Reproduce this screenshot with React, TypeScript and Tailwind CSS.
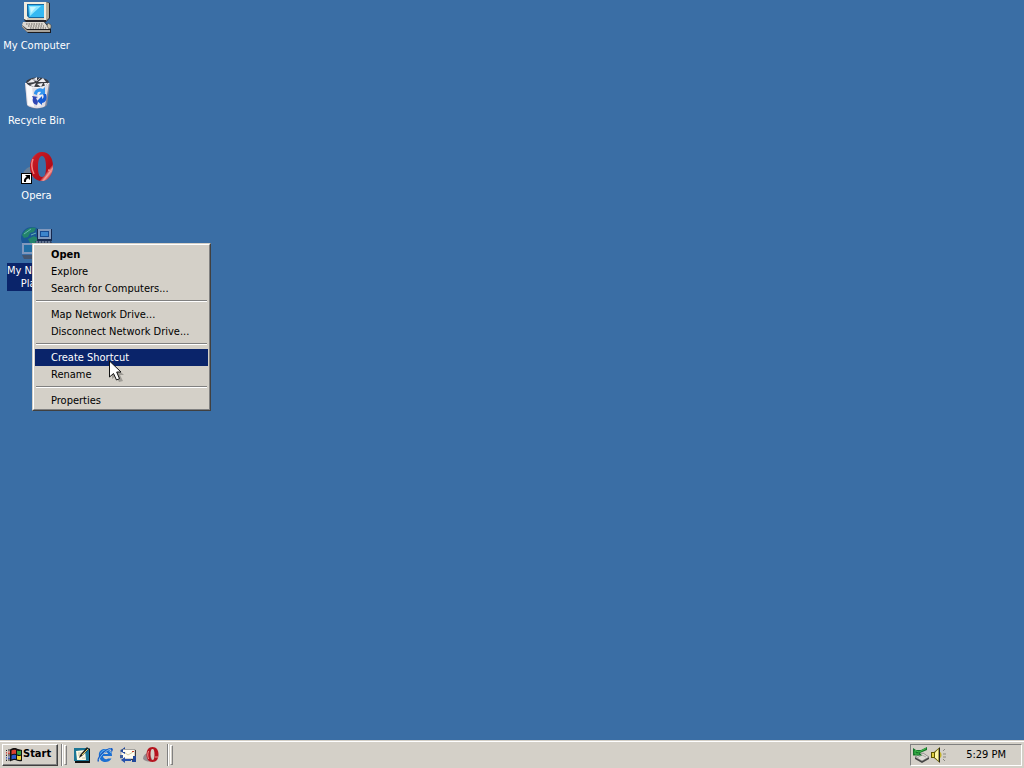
import type { ReactNode } from "react";

function ComputerIcon() {
  return (
    <svg viewBox="0 0 32 32" className="size-8" aria-hidden="true">
      <path d="M2 20l21-1 7 8v4H7l-6-6z" fill="#1b1b1f" />
      <path d="M2 20h21l6 7H6l-5-4z" fill="#dcd8d2" />
      <path d="M1 23l5 5h23v2H6l-5-5z" fill="#a7a29a" />
      <path d="M5 22h17M7 24h16M9 26h16" stroke="#66625d" strokeWidth="1" strokeDasharray="1.500 1" />
      <path d="M27 21l3 2v3l-2 1-2-3z" fill="#cfc8b4" stroke="#444" strokeWidth=".6" />
      <path d="M3 1l2-1h21l3 1v15l-4 4H5l-2-2z" fill="#24242a" />
      <path d="M3 0h22v18H5l-2-1z" fill="#f1ecdf" />
      <path d="M25 0l3 1v15l-3 3z" fill="#b5ac98" />
      <path d="M6 2h17v14H8l-2-2z" fill="#16679f" />
      <path d="M7 3h16v12H8z" fill="#35b9f2" />
      <path d="M8 4h12L9 14z" fill="#8fe6ff" />
      <path d="M9 5h6l-5 6z" fill="#c8f6ff" />
      <path d="M6 17h17" stroke="#b4ac98" />
    </svg>
  );
}

function RecycleIcon() {
  return (
    <svg viewBox="0 0 32 32" className="size-8" aria-hidden="true">
      <path d="M4 6l2 22c4 5 17 4 20 0l3-22z" fill="#85879a" />
      <path d="M4 6l2 22c4 4 15 4 18 1l4-23z" fill="#dedce4" />
      <path d="M5 7l2 21 6 2-2-21z" fill="#fbfafc" />
      <path d="M17 9l-1 21 4-1 3-20z" fill="#eeedf2" />
      <ellipse cx="16.500" cy="5.500" rx="11.500" ry="5" fill="#3a3c43" />
      <path d="M6 6l5-4 3 3zM11 3l5-3v4zM17 5l5-4 3 4zM9 8l6-2-2 4zM16 7l6-1-2 4zM23 6l4 0-3 3z" fill="#eeedf2" />
      <path d="M12 2l4 2 3-3" fill="none" stroke="#a9abb5" />
      <path d="M4.500 6c4 6 19 6 23.500 0" fill="none" stroke="#f8f7fb" strokeWidth="1.200" />
      <path d="M13 17c0-4 5-7 9-5l2-2v7l-6 1 2-3c-2-1-4 0-4 3z" fill="#3293ee" />
      <path d="M25 17c2 5-1 9-4 9v2l-5-4 5-5v3c2-1 2-3 1-5z" fill="#175cd2" />
      <path d="M11 19l6 1-2 1 2 4-1 3c-4-1-5-4-4-7z" fill="#3147b4" />
    </svg>
  );
}

function OperaIcon() {
  return (
    <svg viewBox="0 0 32 32" className="size-8" aria-hidden="true">
      <defs>
        <linearGradient id="opera-red" x1="0" y1="0" x2="1" y2="1">
          <stop offset="0" stopColor="#f0686a" />
          <stop offset=".2" stopColor="#c51a24" />
          <stop offset=".7" stopColor="#b10b18" />
          <stop offset=".78" stopColor="#f7a49e" />
          <stop offset=".88" stopColor="#bb1420" />
          <stop offset="1" stopColor="#8e0611" />
        </linearGradient>
      </defs>
      <path d="M12 14C6 15 1 19 2 25h18z" fill="#7a8491" opacity=".7" />
      <path fillRule="evenodd" d="M21 0c7 0 11 6 11 14s-4 15-11 15S9 23 9 15 14 0 21 0zm0 4c-3 0-4 5-4 11s1 10 4 10 4-4 4-10-1-11-4-11z" fill="url(#opera-red)" />
      <path d="M12 7c-2 5-1 11 1 15M27 18l4 1" fill="none" stroke="#f5837f" strokeWidth="1.500" />
      <rect x="0" y="21" width="11" height="11" fill="#000" />
      <rect x="1" y="22" width="9" height="9" fill="#fff" />
      <path d="M4 23h5v5l-1.700-1.700C5 27 5 28.500 5 30H3c-.5-2.500.5-4 2.700-5.300z" fill="#000" />
    </svg>
  );
}

function NetworkIcon() {
  return (
    <svg viewBox="0 0 32 32" className="size-8" aria-hidden="true">
      <circle cx="11" cy="11" r="11" fill="#1a5795" />
      <path d="M1 8C4 2 10-1 15 1l-2 4-4 1-2 4-4 1zM7 12l6-3 5 3-4 6-5-2zM17 2l4 4-4 1z" fill="#23846b" />
      <path d="M3 7l7-5M10 8l5-2" stroke="#66b5b0" />
      <path d="M16 2h15v12H16z" fill="#16294f" />
      <path d="M17 2h13v10H17z" fill="#8098bd" />
      <path d="M19 4h9v6h-9z" fill="#174a92" />
      <path d="M20 5h7v4h-7z" fill="#3c84cc" />
      <path d="M14 14h16l2 4H16z" fill="#2f4161" />
      <path d="M15 15h14" stroke="#92a2bc" strokeDasharray="2 1" />
      <path d="M1 16h14v11H1z" fill="#8098bd" />
      <path d="M3 18h10v7H3z" fill="#216ea5" />
      <path d="M1 28h15l2 4H3z" fill="#44556f" />
    </svg>
  );
}

function WindowsIcon() {
  return (
    <svg viewBox="0 0 16 16" className="size-4" aria-hidden="true">
      <path d="M4 2.500C8 0 10 1 12 2l4 1v11c-4 1-5-1-7-1s-3 .5-5 1.500z" fill="#111" />
      <path d="M5.500 3.500C7 2.500 8.500 2.500 10 3v4c-1.500-.5-3-.5-4.500.5z" fill="#dc4030" />
      <path d="M11 3.400c1 .5 2.500.7 4 .4v4c-1.500.3-3 0-4-.4z" fill="#37a044" />
      <path d="M5.500 8.500C7 7.500 8.500 7.500 10 8v4c-1.500-.5-3-.5-4.500.5z" fill="#2d58c9" />
      <path d="M11 8.400c1 .5 2.500.7 4 .4v4c-1.500.3-3 0-4-.4z" fill="#efd03a" />
      <path d="M0 3.500h1M2 3h2M0 8.500h1M2 8h2M0 13.500h1M2 13h2" stroke="#222" strokeWidth="1" />
      <path d="M0 5.500h1M2 5h2M0 7h1M2 6.500h2" stroke="#c94840" strokeWidth="1" />
      <path d="M0 10.500h1M2 10h2M0 12h1M2 11.500h2" stroke="#3c58b4" strokeWidth="1" />
    </svg>
  );
}

function ShowDesktopIcon() {
  return (
    <svg viewBox="0 0 16 16" className="size-4" aria-hidden="true">
      <path d="M1 1h14l1 1v14H1z" fill="#111" />
      <path d="M0 1h15v13H0z" fill="#1c7695" />
      <path d="M2 4l9-1 1 10H3z" fill="#fffbe6" />
      <path d="M4 6h4M4 8h2M8 11h3" stroke="#c9c4a6" />
      <path d="M5 11l1-3 7-8 2 2-7 7z" fill="#222" />
      <path d="M8 8l6-6" stroke="#e7d05c" />
    </svg>
  );
}

function ExplorerIcon() {
  return (
    <svg viewBox="0 0 16 16" className="size-4" aria-hidden="true">
      <path d="M14.500 11.500c-3 5.500-11.500 4.500-12.500-2C1 4 5 1.500 9 2c4 .5 6 3 6 7H6c0 3 3.500 4 5 2.500zM6 7h5c0-2.500-5-2.500-5 0z" fill="#1b6fd2" fillRule="evenodd" />
      <path d="M3.500 8c0-3 2.500-5 5.500-5 2 0 4 1 5 3" fill="none" stroke="#65b8f4" />
      <path d="M1 15C-2 11 8 1 14 1c3 0 2 3 0 5 1-3 0-4-3-2C7 6 1 11 2 14z" fill="#1b5cc0" />
      <path d="M2 13C3 9 9 3 14 2" fill="none" stroke="#92cffa" strokeWidth=".8" />
    </svg>
  );
}

function OutlookIcon() {
  return (
    <svg viewBox="0 0 16 16" className="size-4" aria-hidden="true">
      <path d="M2 3h14v10H2z" fill="#222" />
      <path d="M1 2.500h14V12H1z" fill="#fffdf2" stroke="#777" strokeWidth=".6" />
      <path d="M4 5l4 3 5-3" fill="none" stroke="#d6cda2" />
      <path d="M12 4h2v1h-2z" fill="#c63a25" />
      <path d="M5 0v2H3v3h2v2L0 4zM12 15v-2h1V9h3v6z" fill="#20479a" />
      <path d="M5 10l-4 3 4 3v-2h6v-2H5z" fill="#2752ac" />
      <path d="M0 8h3v3H0z" fill="#3d5f9d" />
    </svg>
  );
}

function SmallOperaIcon() {
  return (
    <svg viewBox="0 0 16 16" className="size-4" aria-hidden="true">
      <path d="M6 6C2 6 0 9 0 12c3 3 7 3 10 2z" fill="#948d90" />
      <path fillRule="evenodd" d="M9.500 0c4 0 6 3 6 7.500s-2 7.500-6 7.500-6-3-6-7.500 2-7.500 6-7.500zm0 2C8 2 7.500 4 7.500 7.500S8 13 9.500 13s2-2 2-5.500-.5-5.500-2-5.500z" fill="#b5141f" />
      <path d="M5.500 4c-1 3-1 5 0 8M12 10h3" stroke="#f19691" fill="none" />
    </svg>
  );
}

function HardwareIcon() {
  return (
    <svg viewBox="0 0 16 16" className="size-4" aria-hidden="true">
      <path d="M2 10l8-4 6 4v2l-7 4-7-4z" fill="#444" />
      <path d="M2 10l8-4 6 4-7 4z" fill="#dedcd7" stroke="#777" strokeWidth=".5" />
      <path d="M4 11l5-3 4 2" fill="none" stroke="#aaa8a4" />
      <path d="M14 0v3L7 6l2 2.500H0V1l3 2 5 0z" fill="#14742a" />
      <path d="M13 1.500L6 5 2 3.500V7h4" fill="none" stroke="#43c44e" />
    </svg>
  );
}

function SpeakerIcon() {
  return (
    <svg viewBox="0 0 16 16" className="size-4" aria-hidden="true">
      <path d="M0 5h3l6-5v16l-6-5H0z" fill="#5d5600" />
      <path d="M1 6h2v4H1z" fill="#e1d042" />
      <path d="M4 5.500L7.500 2v12L4 10.500z" fill="#fff9a8" />
      <path d="M8.500 1v14" stroke="#222" />
      <path d="M9 5c2 1 2 5 0 6" fill="#c4b42e" />
      <path d="M12 4l2-2M12 7h3M12 10h3M12 12l2 2" stroke="#8a8881" />
    </svg>
  );
}

function DesktopIcon({ icon, lines, selected = false }: { icon: ReactNode; lines: string[]; selected?: boolean }) {
  return (
    <button type="button" className="flex h-[75px] w-full flex-col items-center gap-1 text-white">
      {icon}
      <span className={selected ? "bg-[#0a246a] py-px leading-[13px] whitespace-nowrap" : "py-px leading-[13px] whitespace-nowrap"}>
        {lines.map((line) => (
          <span key={line} className="block">
            {line}
          </span>
        ))}
      </span>
    </button>
  );
}

const menuGroups = [
  ["Open", "Explore", "Search for Computers..."],
  ["Map Network Drive...", "Disconnect Network Drive..."],
  ["Create Shortcut", "Rename"],
  ["Properties"],
];

function menuItemClass(item: string) {
  const base = "block h-[17px] w-full whitespace-nowrap pl-4 text-left leading-[17px]";
  if (item === "Open") return base + " font-bold";
  if (item === "Create Shortcut") return base + " bg-[#0a246a] text-white";
  return base;
}

function ContextMenu() {
  return (
    <div
      role="menu"
      className="absolute top-[243px] left-8 w-[179px] border border-t-[#d4d0c8] border-r-[#404040] border-b-[#404040] border-l-[#d4d0c8] bg-[#d4d0c8]"
    >
      <div className="border border-t-white border-r-[#808080] border-b-[#808080] border-l-white px-px pt-px">
        {menuGroups.map((group, index) => (
          <div key={group[0]} role="group">
            {index > 0 && (
              <div className="h-[9px] px-px pt-[3px]">
                <div role="separator" className="h-0.5 border-t border-b border-t-[#808080] border-b-white" />
              </div>
            )}
            {group.map((item) => (
              <button key={item} type="button" role="menuitem" className={menuItemClass(item)}>
                {item}
              </button>
            ))}
          </div>
        ))}
      </div>
    </div>
  );
}

function Pointer() {
  return (
    <svg viewBox="0 0 16 24" className="pointer-events-none absolute top-[360px] left-[109px] h-6 w-4" aria-hidden="true">
      <path d="M3 4v15l4-3 3 6 4-1-3-6h4z" fill="#000" opacity=".25" />
      <path d="M.5 1v16l4-3.5 3 6.5 3-1.3L7.700 12H12z" fill="#fff" stroke="#111" />
    </svg>
  );
}

function Grip() {
  return <div className="h-5 w-[3px] border border-t-white border-r-[#808080] border-b-[#808080] border-l-white" />;
}

function Divider() {
  return <div className="h-[22px] w-0.5 border-r border-l border-r-white border-l-[#808080]" />;
}

const launchers = [
  { name: "Show Desktop", icon: <ShowDesktopIcon /> },
  { name: "Internet Explorer", icon: <ExplorerIcon /> },
  { name: "Outlook Express", icon: <OutlookIcon /> },
  { name: "Opera", icon: <SmallOperaIcon /> },
];

function Taskbar() {
  return (
    <footer className="flex h-7 items-center border-t border-[#d4d0c8] bg-[#d4d0c8] shadow-[inset_0_1px_0_#ffffff]">
      <div className="flex w-full items-center px-0.5">
        <button
          type="button"
          className="flex h-[22px] w-14 items-center gap-px border border-t-white border-r-[#404040] border-b-[#404040] border-l-white pl-[3px] font-bold shadow-[inset_-1px_-1px_0_#808080]"
        >
          <WindowsIcon />
          Start
        </button>
        <div className="ml-[3px] flex items-center gap-px">
          <Divider />
          <Grip />
        </div>
        <nav aria-label="Quick launch" className="ml-[7px] flex items-center gap-[7px]">
          {launchers.map((launcher) => (
            <button key={launcher.name} type="button" aria-label={launcher.name}>
              {launcher.icon}
            </button>
          ))}
        </nav>
        <div className="ml-2 flex items-center gap-px">
          <Divider />
          <Grip />
        </div>
        <div className="ml-auto flex h-[22px] w-28 items-center border border-t-[#808080] border-r-white border-b-white border-l-[#808080] pl-0.5">
          <HardwareIcon />
          <span className="ml-0.5">
            <SpeakerIcon />
          </span>
          <time className="flex-1 pt-px pr-[15px] text-right">5:29 PM</time>
        </div>
      </div>
    </footer>
  );
}

export default function App() {
  return (
    <div className="relative flex min-h-screen flex-col bg-[#3a6ea5] font-['DejaVu_Sans_Condensed','DejaVu_Sans',sans-serif] text-[11px] text-black select-none">
      <main className="flex-1 pt-0.5">
        <div className="flex w-[73px] flex-col">
          <DesktopIcon icon={<ComputerIcon />} lines={["My Computer"]} />
          <DesktopIcon icon={<RecycleIcon />} lines={["Recycle Bin"]} />
          <DesktopIcon icon={<OperaIcon />} lines={["Opera"]} />
          <DesktopIcon icon={<NetworkIcon />} lines={["My Network", "Places"]} selected />
        </div>
      </main>
      <ContextMenu />
      <Pointer />
      <Taskbar />
    </div>
  );
}
